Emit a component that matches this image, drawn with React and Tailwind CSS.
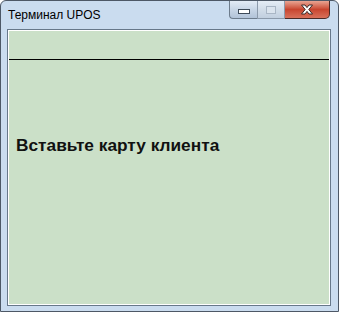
import React from 'react'

const TitleButtons = () => (
    <div className="flex items-start h-[19px] mt-[-1px]">
        <div className="w-[28px] h-[19px] border border-[#6d7c8c] border-r-0 rounded-bl-[4px] bg-gradient-to-b from-[#e3ecf6] via-[#c8d6e6] to-[#b2c3d8] flex items-end justify-center pb-[4px]">
            <div className="w-[12px] h-[5px] bg-white border border-[#3d4a58]" />
        </div>
        <div className="w-[28px] h-[19px] border border-[#8c9aab] bg-gradient-to-b from-[#e5edf6] via-[#d2dde9] to-[#c1cfdf] flex items-center justify-center">
            <div className="w-[10px] h-[8px] border border-[#a9b6c5] bg-[#dbe4ee]" />
        </div>
        <div className="w-[45px] h-[19px] border border-[#4a2a26] border-l-0 rounded-br-[5px] bg-gradient-to-b from-[#e8a493] via-[#c8452f] to-[#d8705a] flex items-center justify-center">
            <svg width="14" height="11" viewBox="0 0 14 11">
                <path d="M1.5 1 H5 L7 3.6 L9 1 H12.5 L8.8 5.5 L12.5 10 H9 L7 7.4 L5 10 H1.5 L5.2 5.5 Z" fill="#ffffff" stroke="#3a2a28" strokeWidth="1" strokeLinejoin="round" />
            </svg>
        </div>
    </div>
)

const App = () => {
    return (
        <div className="w-[339px] h-[312px] bg-[#cadcef] border border-[#4d5866] rounded-t-[6px] flex flex-col font-['Liberation_Sans',Arial,sans-serif] overflow-hidden">
            <div className="h-[28px] flex justify-between pl-[7px] pr-[8px] shrink-0">
                <div className="text-[12px] text-black pt-[5px]">Терминал UPOS</div>
                <TitleButtons />
            </div>
            <div className="flex-1 ml-[6px] mr-[7px] mb-[5px] border border-[#67788a] bg-white p-px flex">
                <div className="flex-1 bg-[#cbe0c8] flex flex-col">
                    <div className="h-[29px] border-b border-black" />
                    <div className="pl-[7px] pt-[73px] text-[17.3px] font-bold text-[#111]">Вставьте карту клиента</div>
                </div>
            </div>
        </div>
    )
}

export default App
